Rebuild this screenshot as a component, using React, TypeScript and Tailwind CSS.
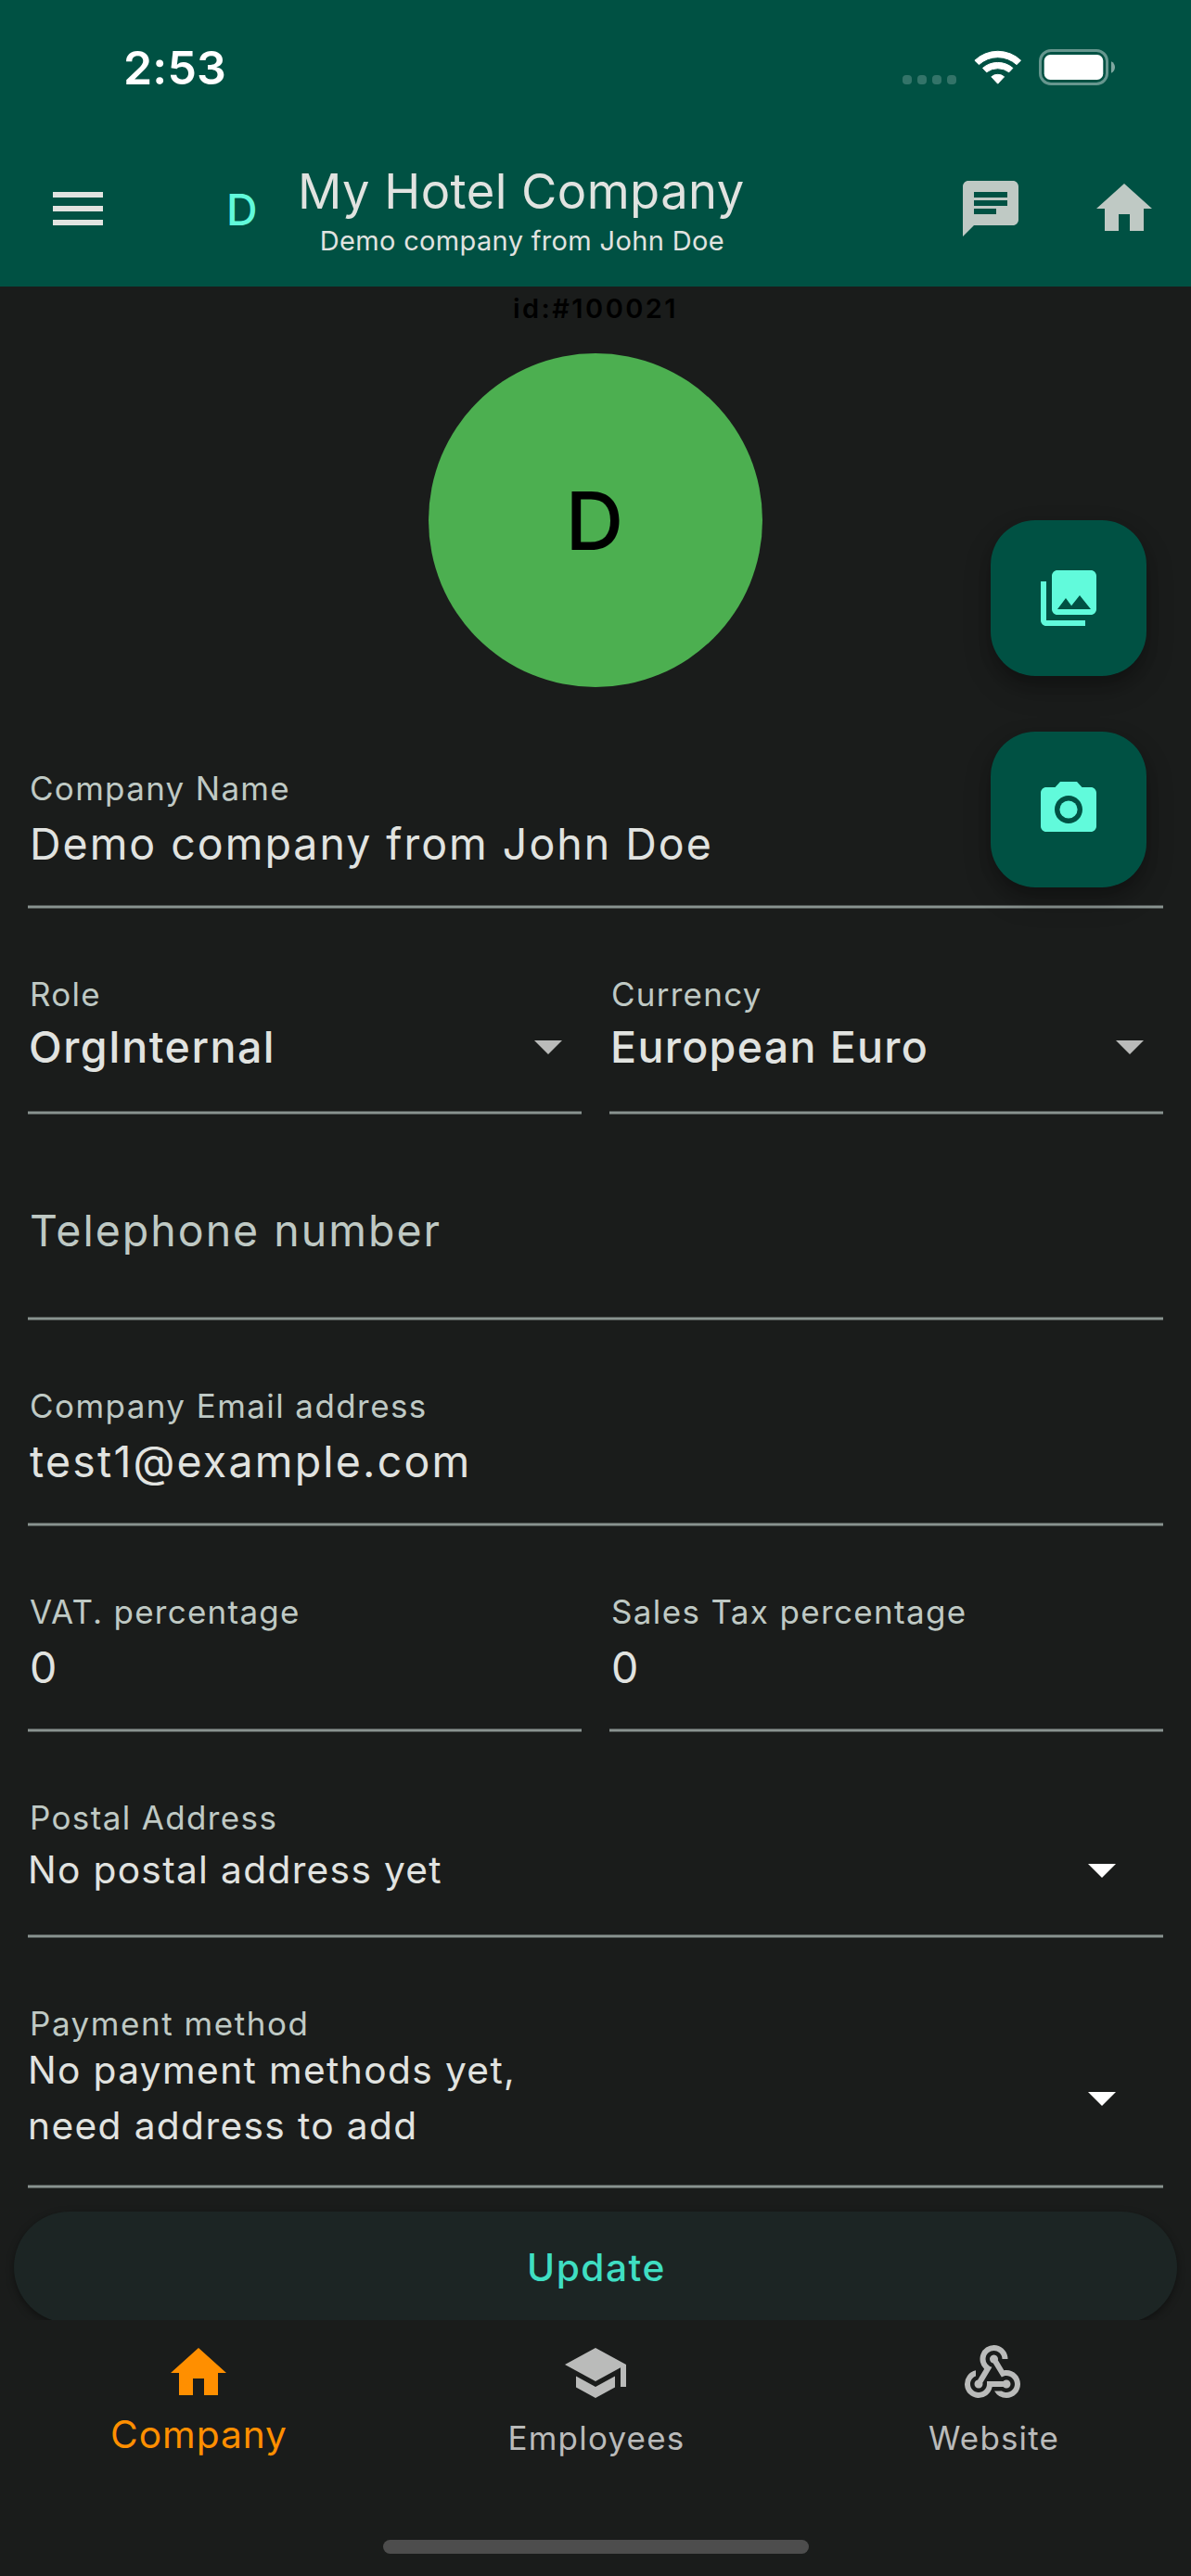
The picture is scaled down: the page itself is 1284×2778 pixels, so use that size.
import type { ReactNode } from "react";
import {
  MdArrowDropDown,
  MdCameraAlt,
  MdChat,
  MdHome,
  MdMenu,
  MdPhotoLibrary,
  MdSchool,
  MdWebhook,
} from "react-icons/md";

function StatusBar() {
  return (
    <div className="flex h-[141px] items-start pt-[43px] pr-[81px] pl-[133px]">
      <span className="text-[50px] leading-[60px] font-semibold tracking-[0.15px] text-white">2:53</span>
      <svg className="mt-[10px] ml-auto" width="230" height="40" viewBox="0 0 230 40" fill="#fff">
        <g opacity="0.2">
          <rect x="0" y="28" width="10" height="10" rx="4" />
          <rect x="16" y="28" width="10" height="10" rx="4" />
          <rect x="32" y="28" width="10" height="10" rx="4" />
          <rect x="48" y="28" width="10" height="10" rx="4" />
        </g>
        <g stroke="#fff" strokeWidth="1" strokeLinejoin="round">
          <path d="M77.9 12.2A36 36 0 0 1 127.500 12.200L123 16.600A30 30 0 0 0 82.400 16.600Z" />
          <path d="M86.5 20.4A25 25 0 0 1 118.9 20.4L114.8 24.8A20 20 0 0 0 90.6 24.8Z" />
          <path d="M95.8 29.8A10.8 10.8 0 0 1 109.6 29.8L102.7 37.2Z" />
        </g>
        <rect x="148.5" y="1.5" width="72" height="36" rx="11.5" fill="none" stroke="#fff" strokeWidth="3" opacity="0.4" />
        <rect x="152.7" y="6" width="63.6" height="27" rx="6.5" />
        <path d="M225 13.3C227.4 14.3 229 16.8 229 19.5C229 22.2 227.4 24.7 225 25.7Z" opacity="0.5" />
      </svg>
    </div>
  );
}

function AppBar() {
  return (
    <div className="flex h-[168px] items-center pr-9 pl-12">
      <MdMenu className="size-[72px] text-[#e1e3e0]" />
      <span className="ml-[124px] w-[77px] pt-0.5 text-[46.5px] leading-[60px] font-medium text-[#61fadb]">D</span>
      <div className="flex flex-col items-center text-[#e1e3e0]">
        <h1 className="text-[52.5px] leading-[66px] tracking-[0.42px]">My Hotel Company</h1>
        <p className="mt-[3px] -mb-px pl-0.5 text-[29px] leading-9 tracking-[0.34px]">Demo company from John Doe</p>
      </div>
      <div className="ml-auto flex gap-[72px] text-[#bfc9c4]">
        <MdChat className="size-[72px]" />
        <MdHome className="size-[72px]" />
      </div>
    </div>
  );
}

function Underline() {
  return <div className="mt-auto h-1 shrink-0 border-y border-[#515755] bg-[#899390]" />;
}

function Label({ children }: { children: ReactNode }) {
  return <div className="mt-[70px] pl-0.5 text-[35px] leading-[44px] text-[#bfc9c4]">{children}</div>;
}

function TextField({ label, tracking, value, valueTracking }: { label: string; tracking: string; value: string; valueTracking: string }) {
  return (
    <div className="flex h-[222px] flex-1 flex-col">
      <Label>
        <span className={tracking}>{label}</span>
      </Label>
      <div className={`mt-2 pl-0.5 text-[46.5px] leading-[60px] text-[#e1e3e0] ${valueTracking}`}>{value}</div>
      <Underline />
    </div>
  );
}

function SelectField({ label, tracking, value, valueTracking }: { label: string; tracking: string; value: string; valueTracking: string }) {
  return (
    <div className="flex h-[222px] flex-1 flex-col">
      <Label>
        <span className={tracking}>{label}</span>
      </Label>
      <div className="-mt-0.5 flex h-[72px] items-center justify-between">
        <span className={`pt-0.5 pl-px text-[46.5px] leading-[60px] font-medium text-[#e1e3e0] ${valueTracking}`}>{value}</span>
        <MdArrowDropDown className="size-[72px] text-[#babbba]" />
      </div>
      <Underline />
    </div>
  );
}

function Fab({ children }: { children: ReactNode }) {
  return (
    <button className="flex size-[168px] items-center justify-center rounded-[48px] bg-[#005143] text-[#61fadb] shadow-[0_14px_30px_rgba(0,0,0,0.22),0_8px_14px_rgba(0,0,0,0.16)]">
      {children}
    </button>
  );
}

function Form() {
  return (
    <div className="mt-[15px] px-[30px]">
      <TextField label="Company Name" tracking="tracking-[1.3px]" value="Demo company from John Doe" valueTracking="tracking-[1.98px]" />
      <div className="flex gap-[30px]">
        <SelectField label="Role" tracking="tracking-[1.3px]" value="OrgInternal" valueTracking="tracking-[1.5px]" />
        <SelectField label="Currency" tracking="tracking-[1.25px]" value="European Euro" valueTracking="tracking-[1.35px]" />
      </div>
      <div className="flex h-[222px] flex-col">
        <div className="mt-[95px] pl-0.5 text-[46.5px] leading-[60px] tracking-[1.99px] text-[#bfc9c4]">Telephone number</div>
        <Underline />
      </div>
      <TextField label="Company Email address" tracking="tracking-[1.42px]" value="test1@example.com" valueTracking="tracking-[2.19px]" />
      <div className="flex gap-[30px]">
        <TextField label="VAT. percentage" tracking="tracking-[1.25px]" value="0" valueTracking="tracking-normal" />
        <TextField label="Sales Tax percentage" tracking="tracking-[1.35px]" value="0" valueTracking="tracking-normal" />
      </div>
      <div className="flex h-[222px] flex-col">
        <Label>
          <span className="tracking-[1.36px]">Postal Address</span>
        </Label>
        <div className="-mt-0.5 flex h-[72px] items-center justify-between pr-[30px]">
          <span className="pt-0.5 text-[40.7px] leading-[60px] tracking-[1.31px] text-[#e1e3e0]">No postal address yet</span>
          <MdArrowDropDown className="size-[72px] text-white" />
        </div>
        <Underline />
      </div>
      <div className="flex h-[270px] flex-col">
        <Label>
          <span className="tracking-[1.55px]">Payment method</span>
        </Label>
        <div className="-mt-[3px] flex items-center justify-between pr-[30px]">
          <span className="pt-0.5 text-[40.7px] leading-[60px] tracking-[1.36px] text-[#e1e3e0]">
            No payment methods yet,
            <br />
            need address to add
          </span>
          <MdArrowDropDown className="size-[72px] text-white" />
        </div>
        <Underline />
      </div>
    </div>
  );
}

function BottomNav() {
  return (
    <nav className="flex h-[276px] flex-col bg-[#1a1c1b]">
      <div className="grid grid-cols-3 pt-[21px]">
        <div className="flex flex-col items-center text-[#ff8f00]">
          <MdHome className="size-[72px]" />
          <span className="mt-[7px] pl-px text-[40.7px] leading-[48px] tracking-[0.94px]">Company</span>
        </div>
        <div className="flex flex-col items-center text-[#babbba]">
          <MdSchool className="size-[72px]" />
          <span className="mt-2.5 pl-0.5 text-[35px] leading-[48px] tracking-[1.2px]">Employees</span>
        </div>
        <div className="flex flex-col items-center text-[#babbba]">
          <MdWebhook className="size-[72px]" />
          <span className="mt-2.5 pl-[3px] text-[35px] leading-[48px] tracking-[1.15px]">Website</span>
        </div>
      </div>
      <div className="mx-auto mt-auto mb-6 h-[15px] w-[459px] rounded-full bg-[#4d4d4d]" />
    </nav>
  );
}

export default function App() {
  return (
    <div className="flex h-[2778px] w-[1284px] flex-col overflow-hidden bg-[#1a1c1b] font-['Inter',sans-serif] whitespace-nowrap">
      <header className="h-[309px] shrink-0 bg-[#005143]">
        <StatusBar />
        <AppBar />
      </header>
      <main className="relative h-[2193px] shrink-0 overflow-hidden">
        <div className="pt-1.5 text-center text-[29px] leading-9 font-semibold tracking-[2.45px] text-black">id:#100021</div>
        <div className="mx-auto mt-[30px] flex size-[360px] items-center justify-center rounded-full bg-[#4caf50] pr-0.5 text-[87px] leading-none font-medium text-black">
          D
        </div>
        <div className="pt-0.5">
          <Form />
        </div>
        <button className="mx-[15px] mt-[25px] flex h-[120px] w-[1254px] items-center justify-center rounded-full bg-[#1c2524] pt-0.5 pl-0.5 text-[40.7px] leading-[60px] font-medium tracking-[1.5px] text-[#3fdec2] shadow-[0_3px_8px_rgba(0,0,0,0.4)]">
          Update
        </button>
        <div className="absolute top-[252px] right-12 flex flex-col gap-[60px]">
          <Fab>
            <MdPhotoLibrary className="size-[72px]" />
          </Fab>
          <Fab>
            <MdCameraAlt className="size-[72px]" />
          </Fab>
        </div>
      </main>
      <BottomNav />
    </div>
  );
}
